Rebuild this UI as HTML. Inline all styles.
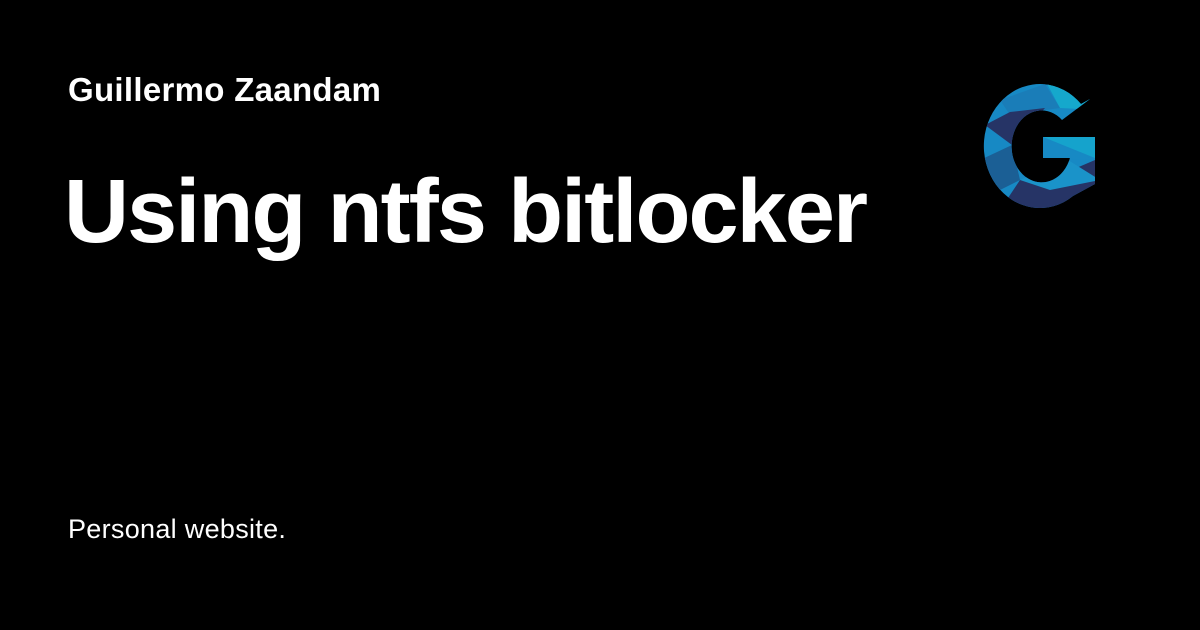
<!DOCTYPE html>
<html><head><meta charset="utf-8"><style>
html,body{margin:0;padding:0;background:#000;width:1200px;height:630px;overflow:hidden;font-family:"Liberation Sans",sans-serif;color:#fff}
.a{position:absolute;left:68px;top:73px;font-size:33px;line-height:1;font-weight:bold;letter-spacing:0.3px}
.t{position:absolute;left:64px;top:167px;font-size:90px;line-height:1;font-weight:bold;letter-spacing:-1.9px}
.p{position:absolute;left:68px;top:516px;font-size:27px;line-height:1;letter-spacing:0.3px}
svg{position:absolute;left:0;top:0}
</style></head><body>
<div class="a">Guillermo Zaandam</div>
<div class="t">Using ntfs bitlocker</div>
<div class="p">Personal website.</div>
<svg width="1200" height="630">
<defs><clipPath id="g"><path d="M1090,99 L1081,104 A56,62 0 1 0 1073,196 L1095,184 L1095,137 L1043,137 L1043,158 L1070,158 A30,36 0 1 1 1062,120 Z"/></clipPath></defs>
<g clip-path="url(#g)">
<rect x="980" y="80" width="120" height="130" fill="#1789c4"/>
<polygon points="1045,80 1100,80 1100,110 1060,108" fill="#15a8cc"/>
<polygon points="1000,100 1045,84 1060,108 1010,115" fill="#1a7db8"/>
<polygon points="985,125 1010,112 1045,108 1012,145" fill="#263466"/>
<polygon points="980,160 1012,145 1020,180 990,195" fill="#1b5f95"/>
<polygon points="1020,180 1060,175 1095,160 1100,210 1000,210" fill="#263466"/>
<polygon points="1020,180 1068,160 1100,180 1050,190" fill="#1a93c9"/>
<polygon points="1043,137 1100,137 1100,160" fill="#15a3cc"/>
<polygon points="1043,137 1095,160 1043,158" fill="#1789c4"/>
</g>
</svg>
</body></html>
